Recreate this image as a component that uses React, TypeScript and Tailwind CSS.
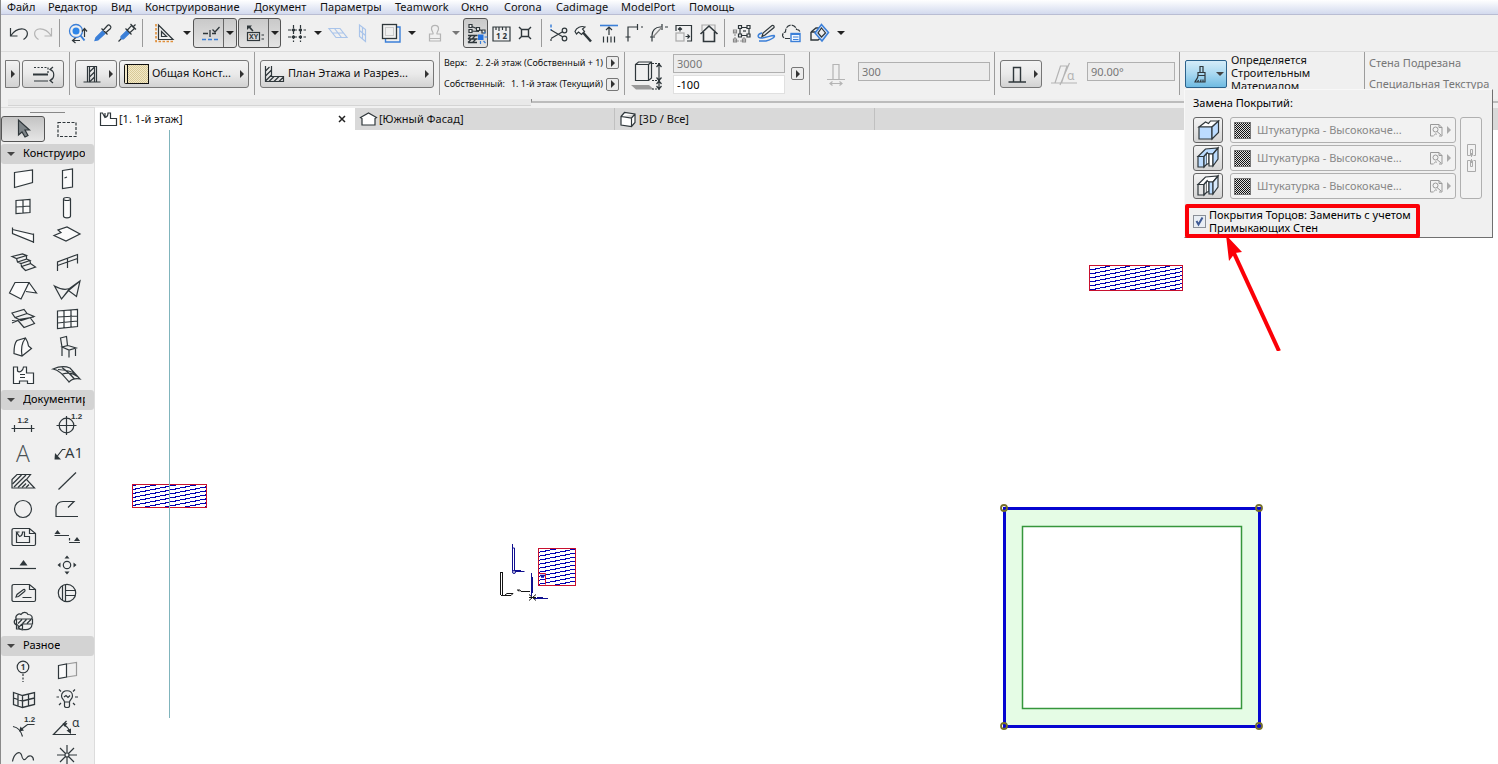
import React from "react";

type Cell = { name: string; cell: string; node: React.ReactNode; kind?: "sep" | "caret" };

const DARK = "#2f373b";
const BLUE = "#3b7fd8";
const GREY = "#b4b4b4";

const FONT = "font-['Noto_Sans','Open_Sans',sans-serif]";

function Icon({ children, size = 24, className = "" }: { children: React.ReactNode; size?: number; className?: string }) {
  return (
    <svg
      width={size}
      height={size}
      viewBox={`0 0 ${size} ${size}`}
      fill="none"
      stroke={DARK}
      strokeWidth="1.2"
      className={`block shrink-0 overflow-visible ${className}`}
      aria-hidden="true"
    >
      {children}
    </svg>
  );
}

function Caret({ color = "#222" }: { color?: string }) {
  return (
    <svg width="8" height="4" viewBox="0 0 8 4" aria-hidden="true" className="block shrink-0">
      <path d="M0 0h8L4 4z" fill={color} />
    </svg>
  );
}

function RightCaret({ color = "#333" }: { color?: string }) {
  return (
    <svg width="4" height="8" viewBox="0 0 4 8" aria-hidden="true" className="block shrink-0">
      <path d="M0 0v8l4-4z" fill={color} />
    </svg>
  );
}

const menus = [
  { t: "Файл", w: "w-[41px]" },
  { t: "Редактор", w: "w-[63px]" },
  { t: "Вид", w: "w-[34px]" },
  { t: "Конструирование", w: "w-[109px]" },
  { t: "Документ", w: "w-[66px]" },
  { t: "Параметры", w: "w-[75px]" },
  { t: "Teamwork", w: "w-[66px]" },
  { t: "Окно", w: "w-[43px]" },
  { t: "Corona", w: "w-[52px]" },
  { t: "Cadimage", w: "w-[65px]" },
  { t: "ModelPort", w: "w-[68px]" },
  { t: "Помощь", w: "w-[60px]" },
];

const I = {
  undo: <path d="M3.500 7v8h7M3.500 15C7 10 11 7.500 16 8c5.500 1 6 7 .5 10.500" />,
  redo: <path stroke={GREY} d="M20.500 7v8h-7M20.500 15C17 10 13 7.500 8 8c-5.500 1-6 7-.5 10.500" />,
  find: (
    <>
      <circle cx="11" cy="10" r="6.500" stroke={BLUE} strokeWidth="1.300" />
      <circle cx="11" cy="10" r="3.500" fill="#2f86e8" stroke="none" />
      <path d="M15.500 14.500l4 5" stroke={BLUE} strokeWidth="2" />
      <path d="M19.500 16V8M17 10.500l2.500-3 2.500 3M15 19.500H8M10.500 17l-3 2.500 3 2.500" />
    </>
  ),
  pipette: (
    <>
      <path d="M4 19.500l1-3 6.500-6.500 2.500 2.500-7 6.500z" fill={BLUE} stroke={BLUE} />
      <path d="M12 9.500l4.500-5c1.500-1.500 4.500 1 3 3L14.500 12M10.500 7.500l6 6" />
    </>
  ),
  syringe: (
    <>
      <path d="M6 18v-2.500l6-6 2.500 2.500-6 6H6" fill={BLUE} stroke={BLUE} />
      <path d="M3.500 20.500L6 18M10.500 7.500l6 6M12 9.500l4.500-5 3 3-5 4.500M18 6l2.500-2.500M15.500 3l5.500 5.500" />
    </>
  ),
  setsquare: (
    <>
      <path d="M4 3v17.500h18" stroke="#e08f3a" strokeWidth="1.600" strokeDasharray="2.500 1.500" />
      <path d="M6.500 4v14.500H21zM9.500 10.500v5h5z" />
    </>
  ),
  guide: (
    <>
      <path d="M5 18.500h17" stroke={BLUE} strokeWidth="1.500" strokeDasharray="4 2" />
      <path d="M6 12.500h5M15 12.500h4M13 9v7M15.500 8.500l2.500 2.500 4.500-5" strokeWidth="1.300" />
    </>
  ),
  tracker: (
    <>
      <path d="M5 4.500h5l-1.500 1.500 3 3.500-1 1-3.500-3.500L5 9z" fill={DARK} stroke="none" />
      <rect x="5.500" y="11.500" width="12" height="8" />
      <text x="11.500" y="18" textAnchor="middle" fontSize="7" fontWeight="700" fill={DARK} stroke="none">XY</text>
      <path d="M19.500 14h2.500M19.500 18h2.500" />
    </>
  ),
  grid: (
    <>
      <path d="M9.500 4v17M16.500 4v17M4 9h18M4 16h18" strokeDasharray="3.500 1.500 4 1.500" />
      <path d="M8 9h3M15 9h3M8 16h3M15 16h3M9.500 7.500v3M16.500 7.500v3M9.500 14.500v3M16.500 14.500v3" strokeWidth="1.800" />
    </>
  ),
  plane1: <path stroke="#a9c4ea" d="M3 7.500h11l7 9H10zM6.500 12h11M8.500 7.500l7 9" />,
  plane2: <path stroke="#a9c4ea" d="M8.500 4l6 4.500v12l-6-5zM11.500 6v12M8.500 9.500l6 5" />,
  layers: (
    <>
      <path d="M18 6h3v15H6.500v-3" stroke={BLUE} strokeWidth="1.400" />
      <rect x="3.500" y="3.500" width="14" height="14" strokeWidth="1.300" />
      <rect x="6.500" y="6.500" width="8" height="8" stroke="#ccc" strokeWidth="1" />
    </>
  ),
  stamp: (
    <path stroke={GREY} strokeWidth="1.200" d="M12 13c1-1.500-2-3-1.500-6 .5-3.500 6.500-3.500 7 0 .5 3-2.500 4.500-1.500 6h3.500v7h-11v-7zM8.500 17.500h11" />
  ),
  trace: (
    <>
      <path d="M6.500 5L20 10.500M6.500 10L15 10.500" />
      <path d="M4 14.500h9.500M4 18h9.500M4 18l3-3M8 18l3-3M4 21.500l3-3M8.500 21.500l3-3M4 21.500h9" strokeWidth="1.300" />
      <path d="M5 3.500h3v3H5zM5 8.500h3v3H5zM12.500 6.500h3v3h-3zM18 9h3v3h-3z" fill="#eee" />
      <rect x="14" y="13.500" width="5.500" height="5.500" fill="#2472e0" stroke="none" />
      <path d="M20.500 16h3M19.500 12.500l2-1.500M19.500 20l2 2M16.500 20v3" stroke={BLUE} />
    </>
  ),
  ruler: (
    <>
      <path d="M4 9V6h17v3M4 9v11h17V9M7 6v3M10 6v4M13.500 6v3M17 6v4" />
      <text x="12.500" y="18" textAnchor="middle" fontSize="8" fontWeight="700" fill={DARK} stroke="none">1 2</text>
    </>
  ),
  cross: <path d="M8.500 8.500h7v7h-7zM6 6l3 3M18 6l-3 3M6 18l3-3M18 18l-3-3" strokeWidth="1.400" />,
  scissors: (
    <>
      <path d="M5 3.500v6" stroke={BLUE} strokeWidth="1.500" strokeDasharray="3 1.500" />
      <path d="M5 20v-2M5 9l12 7M5 17.500l12-7" />
      <circle cx="18.500" cy="9.500" r="2.300" />
      <circle cx="18.500" cy="17.500" r="2.300" />
    </>
  ),
  adjust: (
    <>
      <path d="M4 10.500c1.500-4 6-6 10-4.500l-2.500 2 2 2.500-3 3-3-2.500-2 2z" fill="#f5f5f5" />
      <path d="M12 11.500l8 9" strokeWidth="2.500" />
    </>
  ),
  stretch: (
    <>
      <path d="M4 4.500h18" stroke={BLUE} strokeWidth="1.600" />
      <path d="M13 14V6M10 9l3-3 3 3M7.500 15.500v6M11.500 15.500v6M15 15.500v6M18.500 15.500v6" />
    </>
  ),
  fillet: <path d="M7 20.500V6h10M20 6h2M16.500 3v6M4.500 16h5" />,
  arc: (
    <>
      <path d="M6 20.500v-6c0-5 3.500-8.500 8-8.500h2M4 16h5M16 3v6M19 6h3" />
      <path d="M7 16L16 6" stroke="#888" />
    </>
  ),
  resize: (
    <>
      <path d="M5 10V4.500h15.500V20H16" />
      <rect x="5" y="12" width="8" height="8" stroke="#aaa" />
      <path d="M9 10.500V6.500M7 8.500l2-2 2 2M14.500 15.500h4M16.500 13.500l2 2-2 2" />
    </>
  ),
  house: (
    <>
      <path d="M6 10V4h13v6" stroke="#aaa" />
      <path d="M4.500 13l8.500-8 8.500 8M7.500 11v9.500h11V11" strokeWidth="1.600" />
    </>
  ),
  group: (
    <>
      <path d="M6 10v10h9v-4" stroke="#999" strokeDasharray="2 1" />
      <path d="M4.500 9h3v3h-3zM4.500 18h3v3h-3zM13.500 18h3v3h-3z" stroke="#888" />
      <path d="M11 6.500h9v8h-9z" />
      <path d="M9.500 4.500h3v3h-3zM18 4.500h3v3h-3zM9.500 13h3v3h-3zM18 13h3v3h-3z" fill="#eee" />
      <path d="M14 10h3" />
    </>
  ),
  pencil: (
    <>
      <path d="M8 12c-5 1-5 5-1 5 5 0 9-2.500 13-2.500 2 1-3 4.500-8 5.500H5" stroke={BLUE} strokeWidth="1.400" />
      <path d="M8 15.500l1-3.500 9-7.500c1.500-.5 2.500 1 2 2L11 14z" fill="#eee" />
    </>
  ),
  cloud: (
    <>
      <path d="M11 17.500H6.500c-4-1-3.500-6.500 0-6.500 0-4 2-6.500 5.500-7 3 0 5 2 5.500 4.500 2.500 0 3.500 1.500 3.500 3" strokeDasharray="5 1" />
      <rect x="12" y="12.500" width="9" height="8" fill="#f3f8ff" stroke={BLUE} strokeWidth="1.400" />
      <path d="M12 13.500h9M14 16h5.500M14 18.500h5.500" stroke={BLUE} />
    </>
  ),
  box3d: (
    <>
      <path d="M4 11l5-4h8M4 11v8h7l5-4M4 11h5" strokeWidth="1.400" />
      <path d="M14.500 3.500l7 8-6.500 8.500-7-8z" fill="#cfe0f8" stroke={BLUE} strokeWidth="1.500" />
      <path d="M14.500 7l4 5-4 4-3.500-4z" fill="#eee" />
    </>
  ),
};

const sep = (cell: string, k: string): Cell => ({ name: k, cell, node: null, kind: "sep" });
const caret = (cell: string, k: string, color?: string): Cell => ({ name: k, cell, node: <Caret color={color} />, kind: "caret" });
const tool = (name: string, cell: string, node: React.ReactNode): Cell => ({ name, cell, node: <Icon>{node}</Icon> });

const pressed = "rounded-[3px] border border-[#555] bg-linear-to-b from-[#c9c9c9] to-[#e4e4e4]";

const toolsA: Cell[] = [
  tool("Отменить", "w-[24px]", I.undo),
  tool("Повторить", "w-[24px]", I.redo),
  sep("w-[8px]", "s1"),
  tool("Найти и выбрать", "w-[27px]", I.find),
  tool("Взять параметры", "w-[25px]", I.pipette),
  tool("Передать параметры", "w-[24px]", I.syringe),
  sep("w-[7px]", "s2"),
  tool("Линии привязки", "w-[35px]", I.setsquare),
  caret("w-[12px]", "Варианты линий привязки"),
];
const toolsB: Cell[] = [
  tool("Сетка", "w-[30px]", I.grid),
  caret("w-[14px]", "Варианты сетки"),
  tool("Плоскость редактирования", "w-[26px]", I.plane1),
  tool("Вертикальная плоскость", "w-[24px]", I.plane2),
  tool("Слои", "w-[32px]", I.layers),
  caret("w-[10px]", "Варианты слоев"),
  tool("Гравитация", "w-[32px]", I.stamp),
  caret("w-[14px]", "Варианты гравитации", "#777"),
];
const toolsC: Cell[] = [
  tool("Размеры", "w-[25px]", I.ruler),
  tool("Пересечение", "w-[24px]", I.cross),
  sep("w-[8px]", "s3"),
  tool("Разрезать", "w-[25px]", I.scissors),
  tool("Подогнать", "w-[25px]", I.adjust),
  tool("Растянуть", "w-[25px]", I.stretch),
  tool("Сопряжение", "w-[25px]", I.fillet),
  tool("Скругление", "w-[25px]", I.arc),
  tool("Изменить размер", "w-[25px]", I.resize),
  tool("Подрезка под крышу", "w-[25px]", I.house),
  sep("w-[8px]", "s4"),
  tool("Группировать", "w-[25px]", I.group),
  tool("Пометки", "w-[25px]", I.pencil),
  tool("Облако", "w-[25px]", I.cloud),
  tool("Вид 3D", "w-[31px]", I.box3d),
  caret("w-[14px]", "Варианты вида"),
];

function ToolCells({ items }: { items: Cell[] }) {
  return (
    <>
      {items.map((c) =>
        c.kind === "sep" ? (
          <div key={c.name} className={`flex h-7 justify-center ${c.cell}`}>
            <div className="w-px bg-[#9a9a9a]" />
          </div>
        ) : (
          <button key={c.name} aria-label={c.name} className={`flex h-7 shrink-0 items-center justify-center ${c.cell}`}>
            {c.node}
          </button>
        ),
      )}
    </>
  );
}

const dim = (x: number, y: number, anchor: "start" | "middle" = "middle") => (
  <text x={x} y={y} textAnchor={anchor} fontSize="8" fontWeight="700" fill={DARK} stroke="none" fontFamily="Liberation Sans, sans-serif">
    1.2
  </text>
);

const construct: [string, React.ReactNode][] = [
  ["Стена", <path d="M5.500 7.500L23.500 5v12.500L5.500 22.500z" fill="#fbfbfb" />],
  ["Дверь", <path d="M9.500 5.500l10-1.500v18l-10 1.500zM11.500 13l2.500-1" fill="#fbfbfb" />],
  ["Окно", <path d="M7 7.500l14-1v13l-14 1zM14 7v13M7 14l14-1" fill="#fbfbfb" />],
  [
    "Колонна",
    <>
      <path d="M10.500 6v17c0 2.500 7 2.500 7 0V6" fill="#fbfbfb" />
      <ellipse cx="14" cy="6" rx="3.500" ry="1.500" fill="#fbfbfb" />
    </>,
  ],
  ["Балка", <path d="M3.500 7v5.500L24.500 21v-7.500L3.500 8.500M24.500 12.500V22M3.500 6.500V13" fill="#fbfbfb" />],
  ["Перекрытие", <path d="M1 14.500L8 11.500 5 9l9-3 13 7-14 7z" fill="#fbfbfb" />],
  ["Лестница", <path d="M3 7.500L13.500 5l4 1.500-10 3zM7.500 9.500l1 3.500 9-3v-3.500M8.500 13l3.500 1.500 9-3-3.500-1.500M12 14.500l.5 3 9-3-.5-3M12.500 17.500l4 4 10-3.500-5-3.500" />],
  ["Ограждение", <path d="M4.500 22v-9l20-7.500v9M14.500 9.500V19M4.500 16.500l20-7" />],
  ["Крыша", <path d="M.5 16L6 5.500h14L12 22zM20 5.500L27.500 16l-10.500-1.500" fill="#fbfbfb" />],
  ["Оболочка", <path d="M1.500 9c7 4 11 4 15 2.500L27 4l-3.500 15.500-8-6L8.500 22zM8.500 22l8-10.500M27 4l-11.500 9.500" />],
  ["Сетка рельефа", <path d="M3 8l12-3.500 3 4-12 4zM6 12.500l6 3 13-4-7-3M3 18l6-2.500M9 15.500l6 7 10.500-4-4.500-6M3 15.500L25 12" />],
  ["Навесная стена", <path d="M4.500 6l20-1.500v17l-20 2zM11 5.500v17.500M18 5v17M4.500 12l20-1M4.500 18l20-2" fill="#fbfbfb" />],
  ["Морф", <path d="M5 20.500c0-6 1-11 3-13L16.500 5c2 3 2.500 5 3 8l3 2.500L13 23zM16.500 5c-4 5-4.500 12-3.500 18" fill="#fbfbfb" />],
  ["Объект", <path d="M7.500 5l6-1.500 1 9-5.500 1.500zM9 14l6-1.500 8 2.500-7 2zM9 14v9M16 17v7.500M22.500 15v8M7.500 5L9 14" />],
  ["Зона", <path d="M4.500 6v16.500h6v-2.500h8v2.500h6V12h-7V6h-3c-.5 4-4 6-6 4V6zM11 13.500h5M11 16.500h5" fill="#fbfbfb" />],
  ["Поверхность", <path d="M0 8c7-3 12-3 17-1l10 11c-5-1-8 0-11 3C10 14 6 9 0 8zM9 6.500c4 3 8 6 12.500 11.500M5 8.500C11 9 18 10 22 12.500M9.500 13c5-1.500 11-.5 15 2.500" />],
];

const hatch = (
  <path d="M5 20l12-12M9 20.500l8-8M13 20.500l4-4M3.500 17l9-9M17 20.500l3-3" strokeWidth="1.300" />
);
const sheet = "M5 5.500h15.500l6 5V21c0 1-.5 1.500-1.500 1.500H5C3.500 22.500 3 22 3 21V7.500c0-1.500.5-2 2-2zM20.500 5.500v5h6";

const documentTools: [string, React.ReactNode][] = [
  ["Линейный размер", <><path d="M2.500 17.500h23M5.500 14v7M22.500 14v7" />{dim(14, 12)}</>],
  ["Отметка уровня", <><circle cx="13.500" cy="14.500" r="7.300" /><path d="M13.500 5v19M3.500 14.500h20" />{dim(18, 8, "start")}</>],
  ["Текст", <text x="14" y="23" textAnchor="middle" fontSize="23" fontWeight="300" fill="#4a5155" stroke="none" fontFamily="Open Sans, Noto Sans, sans-serif">A</text>],
  [
    "Выносная надпись",
    <>
      <path d="M12.500 10.500h-3L4 17.500" />
      <path d="M1.500 20.500l.5-6.500 6 6.500z" fill={DARK} stroke="none" />
      <text x="12" y="19" fontSize="15" fill={DARK} stroke="none" fontFamily="Open Sans, Noto Sans, sans-serif">A1</text>
    </>,
  ],
  ["Штриховка", <><path d="M3 21v-8.500l5-5h13.500l-4 5 8 8.500z" />{hatch}</>],
  ["Линия", <path d="M5.500 22.500L23 5.500" />],
  ["Окружность", <circle cx="14" cy="14" r="8.500" />],
  ["Полилиния", <path d="M25 21.500H3V14c0-5 3-7.500 7-7.500h11L15 12.500" />],
  ["Чертеж", <><path d={sheet} /><path d="M7.500 9v10.500h13v-6h-5V9h-2c0 2.500-1 4-3 4.500L7.500 9h3" /></>],
  ["Разрез", <><path d="M1.500 12.500H16M16.500 15v2.500M16 19.500h11" /><path d="M1.500 11l3-4 3 4zM21 18l3-4 3 4z" fill={DARK} stroke="none" /></>],
  ["Фасад", <><path d="M1 17.500h26" /><path d="M10.500 14.500l4-5.500 4 5.500z" fill={DARK} stroke="none" /></>],
  ["Развертка", <><circle cx="14" cy="14" r="3.700" /><path d="M14 4.500l2.500 3h-5zM14 23.500l2.500-3h-5zM4.500 14l3-2.500v5zM23.500 14l-3-2.500v5z" fill={DARK} stroke="none" /></>],
  ["Рабочий лист", <><path d={sheet} /><path d="M7 18l1-2.500 6.500-5c1.500-.5 2 1 1 2L9.500 17.500zM13.500 18.500h9" /></>],
  ["Деталь", <><circle cx="14" cy="14" r="8.700" /><path d="M9.500 6.500v15M12.500 5.500v17M12.500 11.500h10M12.500 16.500h10" /></>],
  [
    "Изменение",
    <>
      <path d="M9 18c-4 0-5-4-2-6-1-4 3-6 5-4.500 2-3 6-2.500 7 0 4 0 5 3 3.500 4.500M9 18c0 4 3 5.500 6 4.500 5 1 8-2 8-5" />
      <path d="M7.500 12h16v5h-10v5h-6zM9 16.500l4-4M13.500 16.500l4-4M18 16.500l4-4M9 21l4-4" />
    </>,
  ],
];

const misc: [string, React.ReactNode][] = [
  [
    "Осевая линия",
    <>
      <circle cx="14" cy="10" r="5.800" />
      <path d="M14 17v8" strokeDasharray="2 1.500" />
      <text x="14" y="13" textAnchor="middle" fontSize="8" fontWeight="700" fill={DARK} stroke="none">1</text>
    </>,
  ],
  ["Угловое окно", <><path d="M13.500 7l10-1.500v13l-10 1.500" stroke="#999" /><path d="M5.500 8.500l8-1.500v13l-8 1.500z" fill="#fbfbfb" /></>],
  ["Стыковка", <path d="M4.500 7.500l9 3 12-3v12l-12 3-9-3zM13.500 10.500v12M9 9v12M19.500 9v12M4.500 13l9 3 12-3" strokeWidth="1.300" />],
  [
    "Лампа",
    <path d="M11.500 17c0-2-3-3-3-6 0-7 11-7 11 0 0 3-3 4-3 6zM11.500 17v4c0 2 5 2 5 0v-4M11 12l2-1.500 2 2 2-2M3.500 12h2.500M22 12h3M6 4.500l2 2M22 4.500l-2 2M6 20l2-2M22 20l-2-2" />,
  ],
  ["Радиальный размер", <><path d="M25.500 11.500h-7L12 16.500M4 13.500c5 1 8 4 9.500 10" /><path d="M10 18.500l1.500-5 3.500 4z" fill={DARK} stroke="none" />{dim(15, 8.5, "start")}</>],
  [
    "Угловой размер",
    <>
      <path d="M13.500 8L.5 21.500h22.500M10.500 11.500c4 2 5 4 6 6.500" />
      <path d="M9.500 10.500l5-.5-2.500 4zM18 21l-4.500-3.500 4.500-2z" fill={DARK} stroke="none" />
      <text x="19" y="14" fontSize="12" fill={DARK} stroke="none">α</text>
    </>,
  ],
  ["Сплайн", <path d="M3.500 20.500C5 12 11 9 12.500 14c1 5 3 6 5 3 3-4 7-2 7 2.500" />],
  ["Горячая точка", <path d="M14 4v8M14 16v8M4 14h8M16 14h8M7 7l5.500 5.500M15.500 15.500L21 21M21 7l-5.500 5.500M12.500 15.500L7 21M12 14a2 2 0 104 0 2 2 0 10-4 0" />],
];

function Section({ title, items }: { title: string; items: [string, React.ReactNode][] }) {
  return (
    <section className="shrink-0">
      <h2 className="flex h-5 items-center gap-2 overflow-hidden rounded-[3px] bg-[#d3d3d3] pl-1.5 text-[11px] font-normal whitespace-nowrap text-black">
        <Caret color="#444" />
        <span className="mr-[9px] overflow-hidden">{title}</span>
      </h2>
      <div className="grid grid-cols-[44px_44px] py-px">
        {items.map(([name, node]) => (
          <button key={name} aria-label={name} className="flex h-7 items-center justify-center">
            <Icon size={28}>{node}</Icon>
          </button>
        ))}
      </div>
    </section>
  );
}

const btn = "flex h-7 shrink-0 items-center rounded-[3px] border border-[#777] bg-linear-to-b from-[#f3f3f3] via-[#eaeaea] to-[#d2d2d2]";
const smallBtn = "flex size-[13px] shrink-0 items-center justify-center rounded-[2px] border border-[#777] bg-[#ececec]";
const field = "block h-[19px] min-w-0 border border-[#b0b0b0] px-[3px] text-[11px]";
const group = "flex h-[43px] w-[184px] shrink-0 items-center self-start";

function Divider() {
  return <div className="h-[43px] w-px shrink-0 self-start bg-[#9c9c9c]" />;
}

function StoreyRow({ label, value }: { label: string; value: string }) {
  return (
    <div className="flex items-center justify-between gap-1">
      <span>{label}</span>
      <span className="flex items-center gap-[3px] whitespace-nowrap">
        {value}
        <button aria-label={label} className={smallBtn}><RightCaret /></button>
      </span>
    </div>
  );
}

function InfoBox() {
  return (
    <div className="flex h-[46px] items-center overflow-hidden border-t border-[#dcdcdc] pl-1 text-[11px] text-[#111]">
      <div className="flex h-[43px] w-[64px] shrink-0 items-center gap-[2px] self-start">
        <button aria-label="Параметры по умолчанию" className="flex h-7 w-[15px] items-center justify-center rounded-r-[3px] border border-[#777] bg-linear-to-b from-[#f3f3f3] to-[#d2d2d2]">
          <RightCaret />
        </button>
        <button aria-label="Линия привязки стены" className={`${btn} w-[42px] justify-center`}>
          <Icon>
            <path d="M3 5.500h14v6" strokeDasharray="2 1.500" />
            <path d="M2 12.500h15" strokeWidth="2" />
            <path d="M3 19h14M19 7.500c5 1 5 9.500 0 11M22 5l-3 2.500 3 2M22 16l-3 2.500 3 2.500" />
          </Icon>
        </button>
      </div>
      <Divider />
      <div className={`${group} gap-[2px] pl-[5px]`}>
        <button aria-label="Структура стены" className={`${btn} w-[42px] gap-[5px] pl-1`}>
          <Icon>
            <path d="M3.500 20h17M7.500 20V4.500h9V20" />
            <path d="M9.500 5v15M14.500 5v15M9.500 10l5-5M9.500 15l5-5M9.500 20l5-5" />
          </Icon>
          <RightCaret />
        </button>
        <button className={`${btn} w-[130px] px-1`}>
          <svg width="25" height="20" viewBox="0 0 25 20" aria-hidden="true" className="shrink-0">
            <defs>
              <pattern id="sand" width="2" height="2" patternUnits="userSpaceOnUse">
                <rect width="2" height="2" fill="#f3e9c8" />
                <path d="M0 0h1v1H0zM1 1h1v1H1z" fill="#d8c997" />
              </pattern>
            </defs>
            <rect x=".5" y=".5" width="24" height="19" rx="1" fill="#f3e9c8" stroke="#111" />
            <rect x="3.500" y=".5" width="21" height="19" fill="url(#sand)" stroke="#111" />
          </svg>
          <span className="ml-[3px] grow text-left whitespace-nowrap">Общая Конст...</span>
          <RightCaret />
        </button>
      </div>
      <Divider />
      <div className={`${group} pl-[5px]`}>
        <button className={`${btn} w-[174px] px-1`}>
          <Icon size={20}>
            <path d="M.5 2v15.500h18v-5h-12V2M.5 7l4-4M.5 12l6-6M.5 17l6-6M4 17.500l5-5M9 17.500l5-5M14 17.500l4-4" />
          </Icon>
          <span className="ml-[3px] grow text-left whitespace-nowrap">План Этажа и Разрез...</span>
          <RightCaret />
        </button>
      </div>
      <Divider />
      <div className="flex h-[43px] w-[184px] shrink-0 flex-col justify-around self-start pr-[5px] pl-1 text-[9px] leading-[16px]">
        <StoreyRow label="Верх:" value="2. 2-й этаж (Собственный + 1)" />
        <StoreyRow label="Собственный:" value="1. 1-й этаж (Текущий)" />
      </div>
      <Divider />
      <div className={`${group} pl-[6px]`}>
        <svg width="32" height="32" viewBox="0 0 32 32" fill="none" stroke={DARK} strokeWidth="1.200" aria-hidden="true">
          <path d="M0 27h18l5 4.500H5z" fill="#9a9a9a" stroke="none" />
          <path d="M4.500 6.500h13v16h-13zM4.500 6.500l3-2.500h13v16l-3 2.500M20.500 4l-3 2.500" />
          <path d="M21 5.500h9M21 22.500h9M21 31h9" strokeDasharray="2 1" />
          <path d="M28 6v25M25.500 9l2.500-3 2.500 3M25.500 19.500l2.500 3 2.500-3M25.500 26l2.500-3 2.500 3M25.500 28l2.500 3 2.500-3" />
        </svg>
        <div className="ml-[10px] flex w-[112px] flex-col gap-[2px]">
          <input aria-label="Высота стены" disabled defaultValue="3000" className={`${field} bg-[#ececec] text-[#777]`} />
          <input aria-label="Смещение низа" defaultValue="-100" className={`${field} border-[#e0e0e0] bg-white text-black`} />
        </div>
        <button aria-label="Параметры высоты" className={`${smallBtn} ml-1.5`}><RightCaret /></button>
      </div>
      <Divider />
      <div className={`${group} pl-[14px]`}>
        <Icon className="mr-[10px]">
          <g stroke={GREY}>
            <path d="M3 17.500h18M9 17.500V2.500h6v15M6 21.500h12M8.500 19.500l-2.500 2 2.500 2M15.500 19.500l2.500 2-2.500 2" />
          </g>
        </Icon>
        <input aria-label="Толщина стены" disabled defaultValue="300" className={`${field} mb-1 w-[132px] bg-[#ececec] text-[#777]`} />
      </div>
      <Divider />
      <div className={`${group} pl-[5px]`}>
        <button aria-label="Геометрия стены" className={`${btn} w-[42px] gap-[5px] pl-1`}>
          <Icon>
            <path d="M3.500 20h17.500M8.500 20V5.500h7V20" strokeWidth="1.400" />
          </Icon>
          <RightCaret />
        </button>
        <Icon size={28} className="mr-[9px] ml-[8px]">
          <g stroke={GREY}>
            <path d="M1 23h26M5 23L10.500 6H17l-5.500 17M19.500 3L10 25" />
          </g>
          <text x="17" y="20" fontSize="12" fill={GREY} stroke="none">α</text>
        </Icon>
        <input aria-label="Угол наклона" disabled defaultValue="90.00°" className={`${field} mb-1 w-[88px] bg-[#ececec] text-[#777]`} />
      </div>
      <Divider />
      <div className={`${group} pl-[5px]`}>
        <button aria-label="Замена покрытий" aria-expanded="true" className="flex h-7 w-[42px] shrink-0 items-center justify-center gap-1 rounded-[2px] border border-[#2c628b] bg-linear-to-b from-[#d5ecf8] via-[#a8d8f0] to-[#6fbbe2]">
          <Icon>
            <path d="M12 4.500h3v6h-3zM10 10.500h7v3h-7zM10 13.500c0 3-2 4-3 6.500h10v-6.500M9.500 20l1-2M12.500 20l.5-2.500M15 20v-2.500" />
          </Icon>
          <Caret color="#444" />
        </button>
        <p className="h-[41px] w-[130px] pl-1 leading-[13px]">
          Определяется<br />Строительным<br />Материалом
        </p>
      </div>
      <Divider />
      <div className="grid h-[43px] min-w-0 grow grid-rows-2 items-center self-start pl-1 whitespace-nowrap text-[#777]">
        <span>Стена Подрезана</span>
        <span>Специальная Текстура</span>
      </div>
    </div>
  );
}

const tabs = [
  {
    label: "[1. 1-й этаж]",
    icon: <path d="M1.500 4v12.500h16V9.500h-6V4h-2.500c0 2.500-1 4-3 4.500L3.500 4zM6 8.500V4" fill="#fff" />,
  },
  { label: "[Южный Фасад]", icon: <path d="M1.500 8.500L9.500 4l8 4.500-1.500 1V16H3V9.500z" fill="#fff" /> },
  { label: "[3D / Все]", icon: <path d="M2 7.500L5.500 3.500 16 5v8.500L12.500 17.500 2 16zM2 7.500l10.500 1.500L16 5M12.500 9v8.500" fill="#fff" /> },
];

function Hatched({ x, y, w, h }: { x: number; y: number; w: number; h: number }) {
  return (
    <g shapeRendering="crispEdges">
      <rect x={x} y={y} width={w} height={h} fill="#fff" />
      <rect x={x} y={y} width={w} height={h} fill="url(#brick)" />
      <rect x={x + 0.5} y={y + 0.5} width={w - 1} height={h - 1} fill="none" stroke="#c8102e" />
    </g>
  );
}

function Canvas() {
  return (
    <main className="min-h-0 grow overflow-hidden bg-white">
      <svg width="1403" height="634" viewBox="95 130 1403 634" className="block" role="img" aria-label="План этажа">
        <defs>
          <pattern id="brick" width="20" height="4" patternUnits="userSpaceOnUse">
            <path d="M0 3h6v1H0zM5 2h5v1H5zM10 1h6v1h-6zM15 0h5v1h-5z" fill="#0000b4" />
          </pattern>
        </defs>
        <Hatched x={132} y={484} w={75} h={24} />
        <Hatched x={1089} y={265} w={94} h={26} />
        <Hatched x={538} y={548} w={38} h={38} />
        <path d="M169.500 130v588" stroke="#80b4bc" />
        <g fill="none" stroke="#d01030">
          <path d="M538.500 573.500h7M545.500 573.500v11" />
        </g>
        <path d="M540 575.500h5M541 577h3" stroke="#1010b0" strokeWidth="1.500" />
        <g fill="none" stroke="#101090">
          <path d="M512.500 544v27M514.500 548v23M512.500 548h2M514.500 571.500h10M515 570.500h6" />
          <circle cx="514" cy="572" r="1.500" fill="#dde" />
          <path d="M531.500 573v23M532.500 577v16M534 598.500h14M537 597.500h6" />
        </g>
        <g fill="none" stroke="#151515">
          <path d="M500.500 572v23M502.500 573v22M500 572.500h3M501 595.500h10l2-2h-6l-2 1.500M517 590h3l1 1.500h9M519 591.500l-1-1.500M529 594.500l7 6M536 594.500l-7 6M529 597.500h7" />
        </g>
        <rect x="1004.500" y="508.500" width="255" height="218" fill="#e5fce5" stroke="#0606d0" strokeWidth="3" />
        <rect x="1022.500" y="526.500" width="219" height="182" fill="#fff" stroke="#36963c" strokeWidth="1.500" />
        {[[1004, 508], [1259, 508], [1004, 726], [1259, 726]].map(([x, y]) => (
          <circle key={`${x}-${y}`} cx={x} cy={y} r="3" fill="none" stroke="#77702a" strokeWidth="1.800" />
        ))}
      </svg>
    </main>
  );
}

const coverings = [
  { name: "Внешнее покрытие", f: ["#fff", "#bcdcff", "#bcdcff"] },
  { name: "Покрытие торцов", f: ["#bcdcff", "#bcdcff", "#fff"] },
  { name: "Внутреннее покрытие", f: ["#fff", "#e4e4e4", "#bcdcff"] },
];

function CoveringPanel() {
  return (
    <div className="absolute top-[89px] right-[5px] z-10 h-[149px] w-[309px] border border-[#f8f8f8] border-r-[#707070] border-b-[#707070] bg-[#f0f0f0] pt-[5px] pr-[10px] pl-2 text-[11px]">
      <h3 className="h-[22px] leading-4 text-black">Замена Покрытий:</h3>
      <div className="flex gap-1">
        <div className="flex grow flex-col gap-[2px]">
          {coverings.map((c, i) => (
            <div key={c.name} className="flex gap-[7px]">
              <button aria-label={c.name} className="flex h-[26px] w-[30px] items-center justify-center rounded-[3px] border border-[#666] bg-linear-to-b from-[#f4f4f4] to-[#d4d4d4]">
                <Icon>
                  {i === 0 ? (
                    <>
                      <path d="M3 9L9.500 4l3 1.500 2-2.500h8L16 9z" fill={c.f[0]} />
                      <path d="M3 9h13v12H3z" fill={c.f[1]} />
                      <path d="M16 9l6.500-6v11.500L16 21z" fill={c.f[2]} />
                    </>
                  ) : (
                    <>
                      <path d="M2 10.500L9.500 3 22 2l-5 6h-4l-2-1-3 3.500z" fill={c.f[0]} />
                      <path d="M2 10.500h6V21H2z" fill={c.f[1]} />
                      <path d="M8 10.500L11 7v11l-3 3z" fill={c.f[1]} />
                      <path d="M11 7l2 1v9.500l-2 .5" fill="#fff" />
                      <path d="M13 8h4v12h-4z" fill={c.f[2]} />
                      <path d="M17 8l5-6v11l-5 7z" fill={i === 1 ? "#bcdcff" : "#d8e9fb"} />
                    </>
                  )}
                </Icon>
              </button>
              <button disabled className="flex h-[26px] grow items-center rounded-[3px] border border-[#b0b0b0] bg-[#f2f2f2] pr-1 pl-[3px] text-[#888]">
                <svg width="17" height="17" viewBox="0 0 17 17" shapeRendering="crispEdges" aria-hidden="true">
                  <defs>
                    <pattern id={`checker${i}`} width="2" height="2" patternUnits="userSpaceOnUse">
                      <rect width="2" height="2" fill="#ddd" />
                      <path d="M0 0h1v1H0zM1 1h1v1H1z" fill="#111" />
                    </pattern>
                  </defs>
                  <rect x=".5" y=".5" width="16" height="16" fill={`url(#checker${i})`} stroke="#777" />
                </svg>
                <span className="ml-1.5 grow text-left whitespace-nowrap">Штукатурка - Высококаче...</span>
                <svg width="13" height="13" viewBox="0 0 13 13" fill="none" stroke="#999" aria-hidden="true" className="mr-1">
                  <path d="M9 .5H.5v11.500h3M9 .5l3 3v8.500H9M9 .5v3h3" />
                  <circle cx="5.500" cy="5.500" r="2.500" />
                  <path d="M4 11.500c1-2 2-2 3-1M7 7.500l4 3.500" />
                </svg>
                <RightCaret color="#aaa" />
              </button>
            </div>
          ))}
        </div>
        <button disabled aria-label="Связать покрытия" className="flex w-[22px] items-center justify-center rounded-[3px] border border-[#b0b0b0] bg-[#f2f2f2]">
          <svg width="9" height="28" viewBox="0 0 9 28" fill="none" stroke="#aaa" aria-hidden="true">
            <path d="M3.500 11.500h-3V.500h8v11h-2M3.500 16.500h-3v11h8v-11h-2M3.500 11.500v-6h2v6M3.500 16.500v6h2v-6" />
            <path d="M4.500 9v10" strokeDasharray="4 2" />
          </svg>
        </button>
      </div>
      <label className="mt-[9px] flex items-center gap-[3px] leading-[13px] text-black">
        <span className="grid size-[13px] shrink-0">
          <input type="checkbox" defaultChecked className="peer col-start-1 row-start-1 size-[13px] appearance-none border border-[#8a8f97] bg-[#e9eef4]" />
          <svg width="13" height="13" viewBox="0 0 13 13" fill="none" stroke="#3f5a94" strokeWidth="2" aria-hidden="true" className="pointer-events-none col-start-1 row-start-1 hidden peer-checked:block">
            <path d="M3.500 6l2 3.500 4-7" />
          </svg>
        </span>
        <span>Покрытия Торцов: Заменить с учетом<br />Примыкающих Стен</span>
      </label>
      <div className="pointer-events-none absolute top-[114px] left-0 h-[34px] w-[235px] rounded-[2px] border-4 border-[#fb0007]" />
      <svg width="60" height="116" viewBox="0 0 60 116" className="pointer-events-none absolute top-[145px] left-[40px]" aria-hidden="true">
        <path d="M8 16l46 100" stroke="#fb0007" strokeWidth="4" />
        <path d="M1 0l16 17-7 1-6 8z" fill="#fb0007" />
      </svg>
    </div>
  );
}

export default function App() {
  return (
    <div className={`relative flex h-screen flex-col overflow-hidden border-l border-[#8a8a8a] bg-[#f0f0f0] ${FONT}`}>
      <nav className="flex h-[15px] shrink-0 items-center border-b border-[#b9bdd3] bg-linear-to-b from-white to-[#d3daee] pl-1.5 text-[11px] leading-[14px] text-[#111]">
        {menus.map((m) => (
          <a key={m.t} href="#" className={`shrink-0 whitespace-nowrap ${m.w}`}>{m.t}</a>
        ))}
      </nav>
      <div className="flex h-9 shrink-0 items-center pl-1.5" role="toolbar" aria-label="Стандартная панель">
        <ToolCells items={toolsA} />
        <div className={`mr-px flex h-[30px] w-[44px] shrink-0 ${pressed}`}>
          <button aria-label="Направляющие" className="flex w-[30px] items-center justify-center border-r border-[#666]"><Icon>{I.guide}</Icon></button>
          <button aria-label="Варианты направляющих" className="flex grow items-center justify-center"><Caret /></button>
        </div>
        <div className={`flex h-[30px] w-[43px] shrink-0 ${pressed}`}>
          <button aria-label="Табло слежения" className="flex w-[30px] items-center justify-center border-r border-[#666]"><Icon>{I.tracker}</Icon></button>
          <button aria-label="Варианты табло" className="flex grow items-center justify-center"><Caret /></button>
        </div>
        <ToolCells items={toolsB} />
        <button aria-label="Фоновый чертеж" className={`flex h-[30px] w-[25px] shrink-0 items-center justify-center ${pressed}`}><Icon>{I.trace}</Icon></button>
        <ToolCells items={toolsC} />
      </div>
      <InfoBox />
      <div className="flex h-[10px] shrink-0 pt-[2px]">
        <div className="mb-px ml-[7px] w-[523px] border-b border-[#d4d4d4] bg-[#e9e9e9]" />
        <div className="mb-1 grow border-b-2 border-l border-b-[#bcbcbc] border-l-[#888] bg-[#ededed]" />
      </div>
      <div className="flex min-h-0 grow">
        <aside className="flex w-[94px] shrink-0 flex-col overflow-hidden border-t border-r border-[#dcdcdc]" aria-label="Инструменты">
          <div className="mt-1 ml-[29px] h-px w-[35px] shrink-0 bg-[#888]" />
          <div className="mt-[3px] mb-[2px] flex h-[26px] shrink-0">
            <button aria-label="Указатель" className="flex w-[44px] items-center justify-center rounded-[3px] border border-[#555] bg-linear-to-b from-[#c4c4c4] to-[#e6e6e6]">
              <Icon>
                <path d="M7.500 3v15l3.500-3 3 5 3-1.500-3-5.500h4.500z" fill="#7d8488" />
              </Icon>
            </button>
            <button aria-label="Бегущая рамка" className="flex w-[44px] items-center justify-center">
              <Icon><rect x="3" y="5.500" width="18" height="14" strokeDasharray="3 1.500" /></Icon>
            </button>
          </div>
          <Section title="Конструирование" items={construct} />
          <Section title="Документирование" items={documentTools} />
          <Section title="Разное" items={misc} />
        </aside>
        <div className="flex min-w-0 grow flex-col pt-px">
          <div className="flex h-[22px] shrink-0 bg-[#d9d9d9] text-[11px] text-[#111]">
            {tabs.map((t, i) => (
              <div key={t.label} className={`flex w-[260px] shrink-0 items-center pt-px pr-[9px] pl-1 ${i === 0 ? "bg-white" : "border-r border-[#c0c0c0]"}`}>
                <button className="flex grow items-center whitespace-nowrap">
                  <Icon size={20}>{t.icon}</Icon>
                  <span>{t.label}</span>
                </button>
                {i === 0 && (
                  <button aria-label="Закрыть вкладку" className="flex size-2 items-center justify-center">
                    <svg width="8" height="8" viewBox="0 0 8 8" aria-hidden="true"><path d="M1 1l6 6M7 1L1 7" stroke="#222" strokeWidth="1.500" /></svg>
                  </button>
                )}
              </div>
            ))}
          </div>
          <Canvas />
        </div>
      </div>
      <CoveringPanel />
    </div>
  );
}
